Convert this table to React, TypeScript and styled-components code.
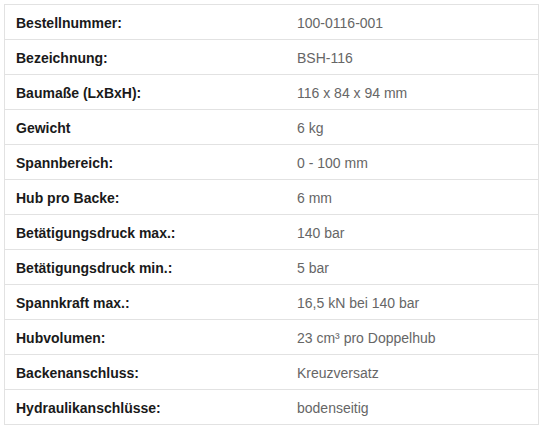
import React from "react";
import styled, { createGlobalStyle } from "styled-components";

const GlobalStyle = createGlobalStyle`
  html, body { margin: 0; padding: 0; background: #ffffff; }
  body { font-family: "Liberation Sans", Arial, Helvetica, sans-serif; }
`;

const Wrapper = styled.div`
  padding: 4px 5px 4px 4px;
`;

const Table = styled.table`
  width: 535px;
  border-collapse: collapse;
  border: 1px solid #e2e2e2;
  font-size: 14px;
  line-height: 20px;
`;

const Row = styled.tr`
  height: 35px;
  border-bottom: 1px solid #e2e2e2;
`;

const Label = styled.th`
  width: 260px;
  padding: 8px 10px 6px 11px;
  text-align: left;
  font-weight: bold;
  color: #1a1a1a;
`;

const Value = styled.td`
  padding: 8px 10px 6px 11px;
  text-align: left;
  color: #666666;
`;

const rows: [string, string][] = [
  ["Bestellnummer:", "100-0116-001"],
  ["Bezeichnung:", "BSH-116"],
  ["Baumaße (LxBxH):", "116 x 84 x 94 mm"],
  ["Gewicht", "6 kg"],
  ["Spannbereich:", "0 - 100 mm"],
  ["Hub pro Backe:", "6 mm"],
  ["Betätigungsdruck max.:", "140 bar"],
  ["Betätigungsdruck min.:", "5 bar"],
  ["Spannkraft max.:", "16,5 kN bei 140 bar"],
  ["Hubvolumen:", "23 cm³ pro Doppelhub"],
  ["Backenanschluss:", "Kreuzversatz"],
  ["Hydraulikanschlüsse:", "bodenseitig"],
];

export default function App() {
  return (
    <>
      <GlobalStyle />
      <Wrapper>
        <Table>
          <tbody>
            {rows.map(([k, v]) => (
              <Row key={k}>
                <Label>{k}</Label>
                <Value>{v}</Value>
              </Row>
            ))}
          </tbody>
        </Table>
      </Wrapper>
    </>
  );
}
